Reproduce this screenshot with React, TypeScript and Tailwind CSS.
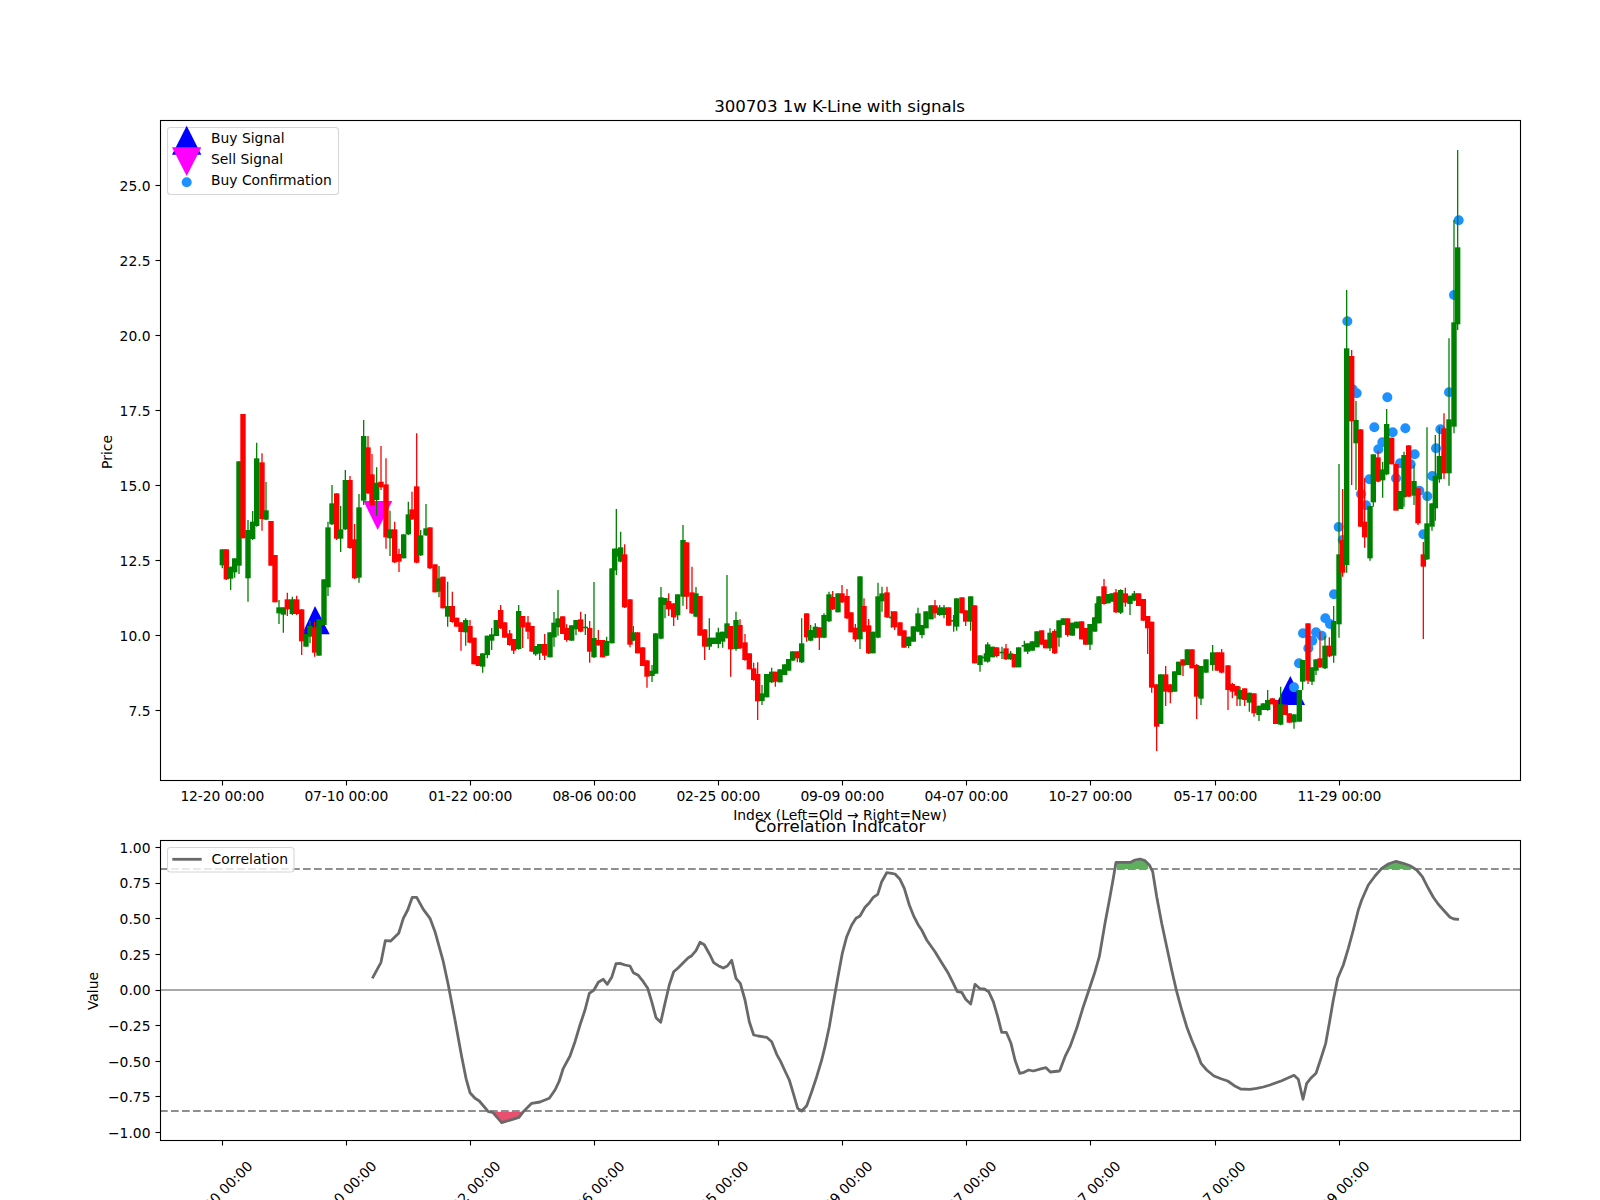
import React from "react";

type C = [number, "G" | "R", number, number, number?, number?];
type Region = { ox: number; oy: number; items: C[] };

const regions: Region[] = [
  { ox: 200, oy: 390, items: [
    [67,"G",478,526,478,535],[79,"R",478,568,478,570],[92,"G",530,566,530,600],[104,"G",505,547,505,563],[117,"G",214,527,214,552],[129,"R",72,445],
    [144,"G",420,565,390,635],[158,"G",395,447,363,450],[170,"G",205,408,158,410],[186,"R",217,387,190,422],[198,"G",361,389,276,390],[213,"R",393,527],[225,"R",495,637,495,575],
    [237,"G",652,670,630,702],[250,"G",652,674,652,728],[262,"R",628,658,608,678],[277,"G",628,672,620,675],[290,"R",628,672,617,675],[305,"R",658,754,658,795],[318,"G",732,770],[330,"G",708,740,692,760],
    [344,"R",712,788,695,800],[357,"G",688,797],[372,"G",568,705],[384,"G",412,592,395,618],[396,"G",340,403,285,405],[410,"R",310,446,310,450],[422,"G",418,446,348,486],[436,"G",270,418,240,420],
    [450,"R",270,474,258,476],[464,"R",448,565,402,567],[477,"G",352,563,312,578],[491,"G",138,332,90,345],[504,"R",172,310,138,312],[516,"R",253,345,192,347],[530,"G",278,330,232,378],[543,"R",275,292,168,300],
    [558,"R",283,442,205,476],[570,"G",418,445,362,498],[584,"R",418,517,395,519],[597,"R",492,515,476,546],[611,"G",433,505],[625,"G",373,433,335,435],[636,"R",358,388,305,390],[650,"R",289,518,130,520],
    [662,"G",436,496,420,498],[678,"G",415,436,342,438],[690,"R",412,535,412,537],[705,"R",523,607],[717,"G",565,605,528,622],[729,"R",560,655],[743,"G",648,680,575,710],[757,"R",648,696,605,698],
    [770,"R",683,710],[783,"R",697,726,697,782],[797,"G",690,727,685,767],[810,"R",708,758,690,760],[822,"R",743,823],[835,"R",798,828],[848,"G",790,830,790,848],[862,"G",737,795,737,805],[875,"G",733,752,714,780],[889,"G",690,738],
  ]},
  { ox: 500, oy: 490, items: [
    [2,"R",360,415,345,417],[14,"R",397,443],[29,"R",430,465,420,467],[41,"R",447,482,447,492],[56,"G",363,477,345,479],[68,"R",378,412,378,474],[84,"R",397,425,378,447],[96,"R",408,485],
    [107,"G",468,493,468,497],[119,"G",462,490,462,510],[134,"R",462,497,432,510],[150,"G",427,502],[162,"G",398,442,366,470],[174,"G",385,412,300,437],[188,"R",379,432],[200,"R",414,450,403,455],
    [215,"G",406,452],[228,"G",390,418,390,435],[242,"R",388,425,365,427],[256,"G",410,415,372,435],[269,"R",414,485,393,518],[282,"G",444,502,276,504],[295,"R",450,466,420,467],[308,"R",450,502],
    [320,"G",453,497,440,499],[336,"G",235,460],[344,"G",176,241],[349,"G",176,200,57,255],[362,"G",172,215,125,217],[374,"R",193,352,163,354],[390,"R",328,464,328,472],[400,"G",427,452,408,454],[413,"R",427,490],
    [428,"R",472,528],[441,"R",511,560,511,593],[456,"G",542,558,525,576],[467,"G",430,551],[483,"G",322,446,291,448],[495,"G",324,345,324,385],[506,"R",333,358,310,378],[521,"R",340,382,340,408],
    [533,"G",313,376,313,390],[549,"G",150,320,105,347],[560,"R",157,320,157,357],[576,"R",307,370,230,372],[588,"G",310,380,291,382],[600,"R",318,437],[614,"R",418,470,418,510],[628,"G",443,470,385,480],
    [642,"G",443,462],[655,"G",427,462,413,475],[668,"G",425,455,425,473],[681,"G",400,444,255,446],[692,"R",408,478,408,560],[708,"G",390,477,365,482],[720,"R",405,475,388,477],[735,"R",457,510,432,512],
    [748,"R",490,538],[761,"R",535,570,518,572],[773,"R",552,634,517,690],[786,"G",610,633,585,645],[800,"G",552,622],[815,"G",545,577,533,579],[826,"R",545,575,545,590],[840,"G",538,577],[854,"G",523,555],[866,"G",507,542],[878,"G",484,512],[892,"R",484,505,484,517],
  ]},
  { ox: 800, oy: 550, items: [
    [5,"G",280,337,205,339],[20,"R",190,262,190,275],[32,"G",240,272,225,274],[46,"G",230,263,220,265],[58,"R",232,263,232,300],[72,"G",195,263,190,265],[87,"G",133,214,125,216],[98,"R",141,178,123,180],
    [114,"G",130,187],[126,"R",130,157,105,159],[141,"R",138,205,117,207],[153,"R",187,247],[166,"R",233,268,222,275],[180,"G",79,268,79,297],[192,"R",168,245,145,247],[206,"R",226,310,207,312],
    [219,"G",245,310],[234,"G",139,263,98,265],[246,"G",130,154,110,185],[261,"R",127,202,110,204],[274,"G",200,205,183,233],[284,"R",184,232,184,240],[300,"R",217,257],[312,"R",241,293],[326,"G",260,288,260,295],
    [340,"G",229,275],[354,"G",190,245,173,247],[366,"G",225,255,225,265],[378,"G",184,235],[393,"G",166,208],[405,"R",166,190,150,205],[419,"G",172,195,165,197],[432,"G",172,195,165,205],[446,"R",172,227],
    [461,"G",210,215,195,245],[470,"G",145,230,145,242],[486,"R",142,190],[497,"R",181,215,181,228],[512,"G",139,215,139,242],[524,"R",166,340],[540,"G",316,345,316,365],[553,"G",320,325,310,335],
    [563,"G",283,335,277,338],[578,"G",290,322],[590,"R",292,318,292,322],[606,"G",305,310,290,327],[618,"R",295,328,282,330],[632,"G",310,328,303,330],[643,"R",312,352],[656,"G",292,352],[673,"G",285,290,272,305],
    [683,"G",280,305,280,312],[697,"G",274,302],[711,"G",244,292],[725,"R",241,284],[737,"R",269,295],[750,"G",248,295,235,303],[764,"R",243,310,238,312],[777,"G",211,263,211,290],[790,"G",205,225],
    [803,"R",205,255,205,260],[817,"G",218,257],[830,"G",215,235],[845,"R",214,268],[857,"R",234,284],[870,"G",222,284,222,300],[884,"G",202,245],[892,"G",160,215,152,220],[897,"G",139,220],
  ]},
  { ox: 1100, oy: 560, items: [
    [12,"R",79,132,57,134],[24,"G",102,130],[36,"G",100,125],[48,"R",97,157,87,159],[62,"G",90,158,88,162],[76,"R",100,128,83,140],[90,"G",107,132,107,165],[103,"G",100,122,93,124],[116,"R",100,138],[130,"R",117,182],
    [143,"R",168,205,168,282],[155,"R",185,383,185,398],[170,"R",373,500,373,573],[182,"G",343,492],[197,"R",343,395,318,438],[211,"R",373,397,373,430],[224,"G",334,395],[236,"G",305,345],[249,"R",298,317,298,348],
    [262,"G",268,315],[276,"R",268,325],[290,"R",315,410,312,477],[303,"G",318,416,318,435],[318,"G",298,338],[338,"G",277,315,255,332],[352,"R",277,332],[365,"R",277,338,267,340],[384,"R",316,390,316,450],
    [397,"R",372,395,368,415],[411,"R",378,407,378,438],[420,"G",390,418,380,438],[434,"R",385,420,385,438],[448,"G",398,428,398,455],[462,"R",400,460,400,470],[477,"G",437,465,437,483],[490,"G",430,450],
    [503,"G",420,450,390,452],[517,"R",415,433],[527,"R",420,492],[542,"G",432,494,380,496],[556,"R",434,465],[568,"R",460,488],[582,"G",463,487,463,506],[598,"G",390,485],[608,"G",300,365,300,390],[624,"R",190,362,190,372],[636,"G",322,365,322,375],[648,"G",298,332,298,345],
  ]},
  { ox: 1280, oy: 400, items: [
    [120,"R",775,802,695,804],[135,"G",737,805,708,807],[148,"R",737,769,712,771],[161,"G",663,767,618,788],[177,"G",463,673,192,713],[188,"R",420,518,267,530],[200,"G",-155,495,-330,518],
    [215,"R",-132,64,-150,255],[228,"G",60,130,3,270],[242,"R",88,380],[254,"R",365,412,235,443],[270,"G",318,475,318,482],[280,"G",163,307,163,320],[294,"R",172,245,152,247],[308,"G",208,241,186,293],
    [320,"G",72,223,27,225],[335,"R",113,193],[348,"R",192,332,192,255],[362,"G",273,327],[372,"G",165,292,155,320],[386,"R",136,290],[402,"G",243,287,195,315],[414,"R",265,370,265,375],[430,"R",463,500,426,717],
    [441,"G",370,478,82,480],[456,"G",310,380,310,392],[466,"G",228,325,105,362],[478,"G",168,238,80,248],[492,"R",85,220,40,237],[507,"G",58,220,-185,257],[522,"G",-233,80,-540,100],[533,"G",-458,-227,-750,-210],
  ]},
];

const dotsZ: [number, number][] = [
  [42,862],[57,790],[85,745],[69,700],[97,722],[108,697],[125,707],[136,655],[150,672],[162,583],[188,420],[176,381],[258,316],[243,282],[268,238],[348,235],[360,190],[392,193],
  [295,148],[307,127],[283,82],[338,97],[376,85],[404,163],[418,272],[442,289],[430,403],[457,228],[468,145],[481,88],
  [202,-236],[230,-20],[218,-32],[322,-8],[507,-23],[522,-315],[536,-539],
];

const z = (o: number, v: number) => o + v / 3;

const candles = regions.flatMap((r) =>
  r.items.map(([x, c, bt, bb, wt, wb]) => ({
    x: z(r.ox, x),
    fill: c === "G" ? "#008000" : "#ff0000",
    top: z(r.oy, bt),
    bot: z(r.oy, bb),
    wt: z(r.oy, wt ?? bt),
    wb: z(r.oy, wb ?? bb),
  }))
);

const pts = (ox: number, oy: number, a: number[]) => {
  const out: string[] = [];
  for (let i = 0; i < a.length; i += 2) out.push(`${(ox + a[i] / 3).toFixed(1)},${(oy + a[i + 1] / 3).toFixed(1)}`);
  return out;
};

const curve = [
  ...pts(80, 770, [877,625,903,577,916,512,932,513,956,490,970,445,983,420,997,382,1010,382,1030,418,1050,445,1065,485,1090,575,1105,645,1125,750,1145,860,1158,925,1170,968,1185,985,1198,993,1225,1025,1238,1027,1265,1058,1317,1042,1330,1025,1355,1000,1380,996,1408,985,1425,960,1437,935,1450,895,1470,858]),
  ...pts(570, 790, [15,755,30,705,45,660,58,610,72,600,85,577,100,568,112,583,125,562,138,521,150,520,165,525,180,528,190,548,205,556,220,575,233,595,245,635,258,683,272,697,285,640,298,585,311,545,325,533,345,513,355,503,365,497,378,482,390,457,403,464,420,495,431,518,445,527,460,534,472,528,485,511,498,565,511,580,525,630,538,695,551,735,565,738,590,742,605,755,620,793,632,815,645,843,658,870,670,910,683,955,695,963,710,947,725,905,740,860,755,810,765,770,778,710,790,640,803,565,817,490,830,440,845,405,858,385,870,378,885,352,897,340,910,322,923,313,935,275,950,248,965,250,975,252,990,268,1003,295,1018,345,1032,380,1045,405,1055,420,1070,450,1095,485,1110,510,1135,550,1150,580,1162,605,1175,607,1187,628,1202,642,1215,583,1230,596,1243,597,1256,605,1270,635,1283,680,1295,727,1309,727,1323,760,1335,810,1349,850,1362,847,1376,840,1390,843,1415,836,1428,833,1441,846,1468,843]),
  ...pts(1060, 790, [0,840,15,800,30,770,50,715,70,650,90,590,105,545,118,500,135,400,150,320,160,265,168,217,212,217,225,210,240,207,255,212,268,225,278,245,290,320,305,400,320,470,335,540,350,605,365,660,380,710,395,750,410,785,423,820,440,840,462,858,483,866,503,873,523,887,542,897,570,898,590,895,610,891,630,885,665,872,702,856,715,868,729,928,740,880,752,865,768,850,783,805,797,760,808,700,820,630,833,565,850,525,865,475,880,420,895,360,905,330,925,285,945,258,965,235,985,222,1008,214,1030,220,1050,227,1070,240,1087,260,1105,295,1120,322,1135,343,1155,365,1170,382,1182,387,1197,388]),
].join(" ");

const fillRed = pts(80, 770, [1238,1025,1265,1058,1317,1042,1328,1025]).join(" ");
const fillGreen1 = pts(1060, 790, [170,237,170,217,212,217,225,210,240,207,255,212,263,222,265,237]).join(" ");
const fillGreen2 = pts(1060, 790, [968,237,985,222,1008,214,1030,220,1050,232,1057,237]).join(" ");

const xLabels = ["12-20 00:00","07-10 00:00","01-22 00:00","08-06 00:00","02-25 00:00","09-09 00:00","04-07 00:00","10-27 00:00","05-17 00:00","11-29 00:00"];
const tickX = xLabels.map((_, i) => Math.floor(222.6 + 124.05 * i) + 0.5);
const priceTicks: [string, number][] = [["25.0",185],["22.5",260],["20.0",335],["17.5",410],["15.0",485],["12.5",560],["10.0",635],["7.5",710]];
const valueTicks: [string, number][] = [["1.00",847.5],["0.75",883.1],["0.50",918.8],["0.25",954.4],["0.00",990],["−0.25",1025.6],["−0.50",1061.3],["−0.75",1096.9],["−1.00",1132.5]];

export default function App() {
  return (
    <div className="flex h-[1200px] w-[1600px] flex-col overflow-hidden bg-white font-['DejaVu_Sans',sans-serif] text-[13.89px] text-black">
      <section className="h-[825px] w-full">
        <svg viewBox="0 0 1600 825" width={1600} height={825} className="block overflow-visible" fill="black">
          <text x={839.5} y={112} textAnchor="middle" fontSize={16.67} letterSpacing={-0.05}>300703 1w K-Line with signals</text>

          <polygon points="315,606 329.7,634.3 302,634.3" fill="#0000ff" />
          <polygon points="1290.3,676 1305,705 1275.7,705" fill="#0000ff" />
          <polygon points="363.5,501 392.3,501 377.7,530" fill="#ff00ff" />
          {dotsZ.map(([x, y], i) => (
            <circle key={i} cx={z(1280, x)} cy={z(400, y)} r={5} fill="#1e90ff" />
          ))}
          {candles.map((c, i) => (
            <g key={i}>
              <line x1={c.x} x2={c.x} y1={c.wt} y2={c.wb} stroke={c.fill} strokeWidth={1.3} />
              <rect x={c.x - 2.7} y={c.top} width={5.4} height={Math.max(c.bot - c.top, 1)} fill={c.fill} />
            </g>
          ))}

          <rect x={160.5} y={120.5} width={1360} height={660} fill="none" stroke="black" strokeWidth={1.1} />
          {priceTicks.map(([t, y]) => (
            <g key={t}>
              <line x1={155.5} x2={160.5} y1={y + 0.5} y2={y + 0.5} stroke="black" strokeWidth={1.1} />
              <text x={150.5} y={y + 6} textAnchor="end">{t}</text>
            </g>
          ))}
          {xLabels.map((t, i) => (
            <g key={t}>
              <line x1={tickX[i]} x2={tickX[i]} y1={780.5} y2={785.5} stroke="black" strokeWidth={1.1} />
              <text x={tickX[i] - 0.2} y={801} textAnchor="middle" letterSpacing={-0.08}>{t}</text>
            </g>
          ))}
          <text transform="translate(111.5 452) rotate(-90)" textAnchor="middle">Price</text>
          <text x={840} y={820} textAnchor="middle">Index (Left=Old → Right=New)</text>

          <rect x={167.5} y={127.5} width={171} height={67} rx={3} fill="white" fillOpacity={0.8} stroke="#d6d6d6" strokeWidth={1.1} />
          <polygon points="186.7,125.7 201.3,154.7 172,154.7" fill="#0000ff" />
          <polygon points="172,147.3 201.3,147.3 186.7,176" fill="#ff00ff" />
          <circle cx={186.7} cy={182.3} r={5} fill="#1e90ff" />
          <text x={211} y={143.3}>Buy Signal</text>
          <text x={211} y={164.3}>Sell Signal</text>
          <text x={211} y={185.3}>Buy Confirmation</text>
        </svg>
      </section>

      <section className="h-[375px] w-full">
        <svg viewBox="0 825 1600 375" width={1600} height={375} className="block overflow-visible" fill="black">
          <text x={840} y={832} textAnchor="middle" fontSize={16.67}>Correlation Indicator</text>

          <line x1={160} x2={1520} y1={990} y2={990} stroke="#a9a9a9" strokeWidth={2} />
          <line x1={160} x2={1520} y1={869} y2={869} stroke="#8f8f8f" strokeWidth={2.1} strokeDasharray="7.7 3.3" />
          <line x1={160} x2={1520} y1={1111} y2={1111} stroke="#8f8f8f" strokeWidth={2.1} strokeDasharray="7.7 3.3" />
          <polygon points={fillRed} fill="#e9506f" />
          <polygon points={fillGreen1} fill="#5faf5f" />
          <polygon points={fillGreen2} fill="#5faf5f" />
          <polyline points={curve} fill="none" stroke="#696969" strokeWidth={2.8} strokeLinejoin="round" />

          <rect x={160.5} y={840.5} width={1360} height={300} fill="none" stroke="black" strokeWidth={1.1} />
          {valueTicks.map(([t, y]) => (
            <g key={t}>
              <line x1={155.5} x2={160.5} y1={Math.floor(y) + 0.5} y2={Math.floor(y) + 0.5} stroke="black" strokeWidth={1.1} />
              <text x={150.5} y={y + 5.3} textAnchor="end">{t}</text>
            </g>
          ))}
          {xLabels.map((t, i) => (
            <g key={t}>
              <line x1={tickX[i]} x2={tickX[i]} y1={1140.5} y2={1145.5} stroke="black" strokeWidth={1.1} />
              <text transform={`translate(${tickX[i] - 2.6} 1193.5) rotate(-45)`} textAnchor="middle" dominantBaseline="central">{t}</text>
            </g>
          ))}
          <text transform="translate(98 991) rotate(-90)" textAnchor="middle">Value</text>

          <rect x={167.5} y={847.5} width={126.5} height={24.5} rx={3} fill="white" fillOpacity={0.8} stroke="#d6d6d6" strokeWidth={1.1} />
          <line x1={172.3} x2={201.7} y1={859.3} y2={859.3} stroke="#696969" strokeWidth={2.8} />
          <text x={211.5} y={864.3}>Correlation</text>
        </svg>
      </section>
    </div>
  );
}
